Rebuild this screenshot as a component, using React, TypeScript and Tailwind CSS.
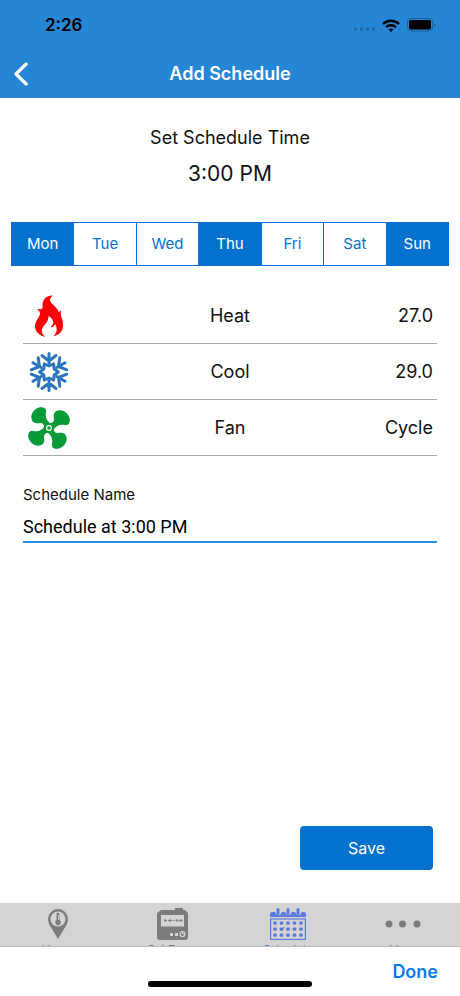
import React, { useState } from 'react';

const days = ['Mon', 'Tue', 'Wed', 'Thu', 'Fri', 'Sat', 'Sun'];

const FlameIcon = () => (
  <svg viewBox="0 0 28 42" className="w-7 h-[42px]" fill="#fb0007">
    <path d="M18 .5C12 0 8 4 7.500 9c0 1.500.3 3 0 4.500-1.500 1-3.500.5-5.500.5 2 1.500 3 3 3 4.500C5 22 0 26 0 31c0 5.500 4 9.500 10.500 11C7 39.500 6 36 7.500 33c1.500-3.500 6-5 6-12 3.500 2 5.500 5 4.500 8-.5 1.500-1.500 2-2.500 3 2 .5 4-.5 4.500-3 3 4 2 9.500-2 12.500 6-1.500 10-5 10-11 0-4-1-7-2-9.500-.5-2 0-4 .3-5.500-1.300.5-2 1-2.500 2-1-4-4-6-6.500-8.500S13.500 4 18 .5z" />
  </svg>
);

const SnowIcon = () => (
  <svg viewBox="-21 -21 42 42" className="w-[42px] h-[42px]" fill="none" stroke="#2b75bd" strokeWidth="3" strokeLinecap="round" strokeLinejoin="round">
    {[0, 60, 120, 180, 240, 300].map(angle => (
      <g key={angle} transform={`rotate(${angle})`}>
        <path d="M0-18.500V-9M-7-16.500L0-11 7-16.500" />
        <path d="M-4.500-8L0-6 4.500-8" />
      </g>
    ))}
  </svg>
);

const FanIcon = () => (
  <svg viewBox="-21 -21 42 42" className="w-[42px] h-[42px]" fill="#069b36">
    {[0, 90, 180, 270].map(angle => (
      <path
        key={angle}
        transform={`rotate(${angle})`}
        d="M2-4C-2-7-4-10-3-16-2-20-6-21.500-10-20.500-15-19-18.500-14-17.500-9.500-16.500-4-12-4.500-8.500-5-6-5-5-3-4 0z"
      />
    ))}
    <circle r="5" />
    <circle r="3" fill="#fff" />
    <circle r="1.8" />
  </svg>
);

const PinIcon = () => (
  <svg viewBox="0 0 20 30" className="w-5 h-[30px]" fill="#7c7c7c">
    <path d="M10 0a10 10 0 0 0-10 10c0 4 2 7 4 10l6 10 6-10c2-3 4-6 4-10A10 10 0 0 0 10 0z" />
    <circle cx="10" cy="10" r="7.500" fill="#d4d4d4" />
    <path d="M8.500 5a1.500 1.500 0 0 1 3 0v6a2.800 2.800 0 1 1-3 0z" />
    <path d="M10.500 6v5" stroke="#d4d4d4" strokeWidth=".8" />
  </svg>
);

const ThermostatIcon = () => (
  <svg viewBox="0 0 31 32" className="w-[31px] h-8" fill="#7c7c7c">
    <path d="M18 0h8v3h-8zM4 2h24l3 3v24a3 3 0 0 1-3 3H3a3 3 0 0 1-3-3V5z" />
    <path d="M4 7h23v11.500H4z" fill="#d4d4d4" />
    <path d="M7 12.500h3m1 0h4m1 0h1.500m1 0h2m1 0h4M8 11v3m5-3v3m7-3v3m4-3v3" stroke="#7c7c7c" />
    <path d="M13 25h3v3h-3zM18 25h3v3h-3z" fill="#d4d4d4" />
    <circle cx="25.500" cy="26" r="2.500" fill="none" stroke="#d4d4d4" strokeWidth="1.200" />
    <path d="M25.500 24v2h2" fill="none" stroke="#d4d4d4" />
  </svg>
);

const CalendarIcon = () => (
  <svg viewBox="0 0 36 32" className="w-9 h-8" fill="#5b7ae0">
    <path d="M0 9V6q0-2 2-2h3l2 3h3l2-3h3l2 3h3l2-3h3l2 3h3l2-3h2q2 0 2 2v3z" />
    {[8, 18, 28].map(x => (
      <rect key={x} x={x - 1.5} y="0" width="3" height="7" rx="1.500" />
    ))}
    <rect x=".6" y="11" width="34.800" height="20.400" fill="none" stroke="#5b7ae0" strokeWidth="1.200" />
    {[15, 21, 27].map(y =>
      [5, 11.5, 18, 24.5, 31].map(x => (
        <rect key={`${x}-${y}`} x={x - 1.8} y={y - 1.5} width="3.600" height="3.200" rx="1" />
      ))
    )}
    <path d="M10.500 21l1.500 1.500 2.500-4" fill="none" stroke="#5b7ae0" />
  </svg>
);

const MoreIcon = () => (
  <svg viewBox="0 0 36 8" className="w-9 h-8" fill="#7c7c7c">
    <circle cx="4" cy="4" r="3.500" />
    <circle cx="17.500" cy="4" r="3.500" />
    <circle cx="32" cy="4" r="3.500" />
  </svg>
);

const settings = [
  { label: 'Heat', value: '27.0', icon: <FlameIcon /> },
  { label: 'Cool', value: '29.0', icon: <SnowIcon /> },
  { label: 'Fan', value: 'Cycle', icon: <FanIcon /> },
];

const tabs = [
  { label: 'Home', icon: <PinIcon />, active: false },
  { label: 'Set Temp', icon: <ThermostatIcon />, active: false },
  { label: 'Schedule', icon: <CalendarIcon />, active: true },
  { label: 'More', icon: <MoreIcon />, active: false },
];

const App = () => {
  const [selectedDays, setSelectedDays] = useState(['Mon', 'Thu', 'Sun']);
  const [name, setName] = useState('Schedule at 3:00 PM');

  const toggleDay = (day: string) => {
    setSelectedDays(current =>
      current.includes(day) ? current.filter(d => d !== day) : [...current, day]
    );
  };

  return (
    <div className="min-h-screen flex flex-col bg-white text-[#111] font-['Inter',sans-serif]">
      <header className="bg-[#2686d6]">
        <div className="h-[50px] flex items-center justify-between pl-[45px] pr-6">
          <span className="pt-0.5 text-[17px] font-semibold text-black">2:26</span>
          <div className="flex items-center gap-[7px]">
            <svg viewBox="0 0 21 12" className="w-[21px] h-3" fill="#1f6cac">
              {[0, 6, 12, 18].map(x => (
                <rect key={x} x={x} y="8" width="3" height="4" rx="1" />
              ))}
            </svg>
            <svg viewBox="0 0 18 13" className="w-[18px] h-[13px]" fill="none" stroke="#000" strokeWidth="2.400">
              <path d="M1 5a11.500 11.500 0 0 1 16 0" />
              <path d="M4 8.200a7.200 7.200 0 0 1 10 0" />
              <path d="M6.500 10.500a3.800 3.800 0 0 1 5 0L9 13z" fill="#000" stroke="none" />
            </svg>
            <svg viewBox="0 0 29 14" className="w-[29px] h-3.5">
              <rect x=".5" y=".5" width="25" height="12.500" rx="3.500" fill="none" stroke="#1b5f98" />
              <rect x="2" y="2" width="22" height="9.500" rx="2" />
              <path d="M27 5q1.500.5 1.500 2T27 9z" fill="#1b5f98" />
            </svg>
          </div>
        </div>
        <div className="h-12 grid grid-cols-[1fr_auto_1fr] items-center px-3.5">
          <button aria-label="Back" className="justify-self-start">
            <svg viewBox="0 0 14 24" className="w-3.5 h-6" fill="none" stroke="#fff" strokeWidth="3.2" strokeLinecap="round" strokeLinejoin="round">
              <path d="M12.200 2L2 12l10.200 10" />
            </svg>
          </button>
          <h1 className="text-lg font-semibold text-white">Add Schedule</h1>
        </div>
      </header>

      <main className="flex-1 flex flex-col">
        <div className="pt-6 flex flex-col items-center">
          <h2 className="text-lg leading-8">Set Schedule Time</h2>
          <button className="text-[21px] leading-10">3:00 PM</button>
        </div>

        <div className="mt-7 mx-[11px] h-11 flex border border-[#0472ce] divide-x divide-[#0472ce]">
          {days.map(day => (
            <button
              key={day}
              onClick={() => toggleDay(day)}
              aria-pressed={selectedDays.includes(day)}
              className={`flex-1 text-[15px] ${
                selectedDays.includes(day) ? 'bg-[#0472ce] text-white' : 'text-[#0472ce]'
              }`}
            >
              {day}
            </button>
          ))}
        </div>

        <div className="mt-[22px] mx-[23px]">
          {settings.map(row => (
            <button
              key={row.label}
              className="w-full h-14 grid grid-cols-3 items-center px-1 border-b border-[#a6a6a6] text-lg"
            >
              <span className="w-11 flex justify-center">{row.icon}</span>
              <span>{row.label}</span>
              <span className="text-right">{row.value}</span>
            </button>
          ))}
        </div>

        <div className="mt-[27px] mx-[23px] flex flex-col">
          <label htmlFor="name" className="text-[15px] leading-6">Schedule Name</label>
          <input
            id="name"
            value={name}
            onChange={(e) => setName(e.target.value)}
            className="h-9 pt-1 font-['Roboto',sans-serif] text-lg text-black border-b-2 border-[#2f8fdd] outline-none"
          />
        </div>

        <button className="mt-auto mb-[33px] mr-[27px] self-end w-[133px] h-11 rounded bg-[#0472ce] text-white text-base">
          Save
        </button>
      </main>

      <nav className="h-11 overflow-hidden grid grid-cols-4 bg-[#d4d4d4] border-b border-[#bdbdbd]">
        {tabs.map(tab => (
          <a
            key={tab.label}
            href="#"
            className={`pt-[5px] flex flex-col items-center gap-px text-[11px] leading-4 ${
              tab.active ? 'text-[#5b7ae0]' : 'text-[#7c7c7c]'
            }`}
          >
            <span className="h-8 flex items-center shrink-0">{tab.icon}</span>
            {tab.label}
          </a>
        ))}
      </nav>

      <footer className="h-[49px] flex flex-col justify-between px-[22px] pb-[9px]">
        <button className="h-[34px] pt-4 self-end text-lg leading-[18px] font-semibold text-[#0a7aee]">Done</button>
        <div className="w-[164px] h-1.5 self-center shrink-0 rounded-full bg-black"></div>
      </footer>
    </div>
  );
};

export default App;
